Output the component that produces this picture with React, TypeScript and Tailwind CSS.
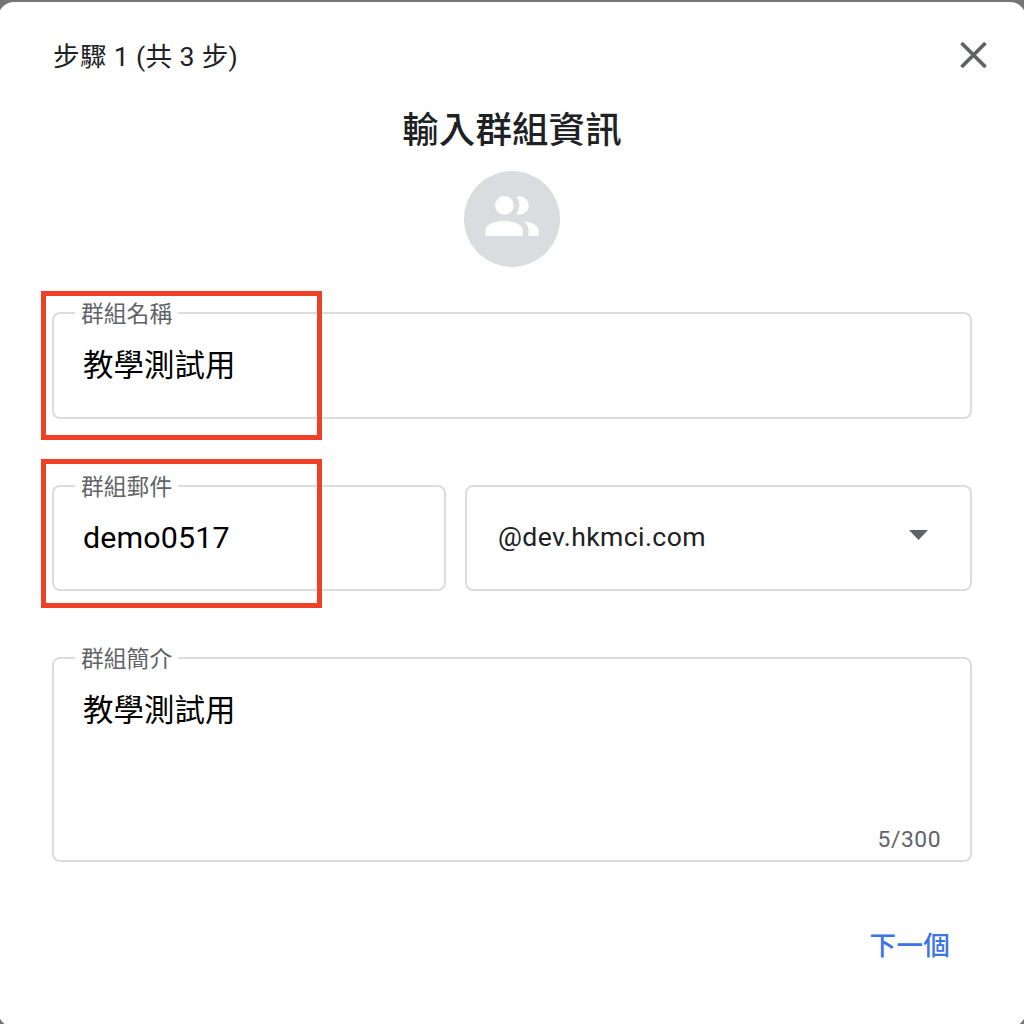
import React from 'react';

interface OutlinedFieldProps {
  label?: string;
  className?: string;
  children: React.ReactNode;
}

const OutlinedField: React.FC<OutlinedFieldProps> = ({ label, className = '', children }) => {
  return (
    <div className={`relative rounded-[8px] border-2 border-[#dadce0] ${className}`}>
      {label && (
        <span className="absolute -top-[13px] left-[21px] bg-white px-[6px] text-[22.8px] leading-[28px] whitespace-nowrap text-[#5f6368]">
          {label}
        </span>
      )}
      {children}
    </div>
  );
};

const CloseIcon: React.FC = () => (
  <svg width="28" height="28" viewBox="0 0 28 28" fill="none" stroke="#5f6368" strokeWidth="3.8">
    <path d="M2.5 2L26.5 26M26.5 2L2.5 26" />
  </svg>
);

const GroupIcon: React.FC = () => (
  <svg width="58" height="58" viewBox="0 0 58 58" fill="white">
    <circle cx="21.4" cy="18.4" r="9.3" />
    <path d="M2.5 49V43C2.5 36.5 15 33.7 21.4 33.7S39.9 36.5 39.9 43V49z" />
    <path d="M33.3 9.6C37.3 14.5 37.3 22.2 33.3 27.2c1 .3 2 .5 3.2.5a9.2 9.2 0 0 0 0-18.5c-1.2 0-2.2.1-3.2.4z" />
    <path d="M40.5 34.2C44 36.6 45.5 39.5 45.5 43V49h10V43C55.5 38 48 35 40.5 34.2z" />
  </svg>
);

const CreateGroupDialog: React.FC = () => {
  return (
    <div className="-mx-[2px] flex h-[1025px] shrink-0 flex-col rounded-[16px] bg-white px-[54px]">
      <header className="flex h-[100px] items-start justify-between">
        <span className="mt-[38px] ml-[1px] text-[26.6px] leading-[34px] tracking-[0.35px] whitespace-nowrap text-[#202124]">
          步驟 1 (共 3 步)
        </span>
        <button className="mt-[39px] -mr-[15px]" aria-label="關閉">
          <CloseIcon />
        </button>
      </header>

      <h1 className="mt-[1px] text-center text-[36.5px] leading-[56px] font-medium tracking-[0.1px] text-[#202124]">輸入群組資訊</h1>
      <div className="mx-auto mt-[12px] flex h-[96px] w-[96px] justify-center rounded-full bg-[#dadce0] pt-[16px]">
        <GroupIcon />
      </div>

      <form className="mt-[45px] flex flex-col text-black">
        <OutlinedField label="群組名稱" className="h-[107px]">
          <div className="pt-[32px] pl-[29px] text-[30.4px] leading-[40px] tracking-[0.1px]">教學測試用</div>
          <div className="absolute -top-[23px] -left-[13px] h-[149px] w-[281px] border-[5px] border-[#ee4026]" />
        </OutlinedField>

        <div className="mt-[66px] flex gap-[19px]">
          <OutlinedField label="群組郵件" className="h-[106px] w-[394px]">
            <div className="pt-[31px] pl-[29px] text-[30.4px] leading-[40px] tracking-[0.15px]">demo0517</div>
            <div className="absolute -top-[28px] -left-[13px] h-[149px] w-[281px] border-[5px] border-[#ee4026]" />
          </OutlinedField>
          <OutlinedField className="h-[106px] flex-1">
            <div className="flex items-center justify-between pt-[30px] pr-[42px] pl-[31px] text-[#202124]">
              <span className="text-[26.6px] leading-[40px] tracking-[0.38px]">@dev.hkmci.com</span>
              <svg width="19" height="10" viewBox="0 0 19 10" className="-mt-[4px]" fill="#5f6368">
                <path d="M0 0h19L9.5 10z" />
              </svg>
            </div>
          </OutlinedField>
        </div>

        <OutlinedField label="群組簡介" className="mt-[66px] flex h-[205px] flex-col justify-between">
          <div className="pt-[32px] pl-[29px] text-[30.4px] leading-[40px] tracking-[0.1px]">教學測試用</div>
          <span className="pr-[29px] pb-[6px] text-right text-[22.8px] leading-[28px] tracking-[0.55px] text-[#5f6368]">
            5/300
          </span>
        </OutlinedField>
      </form>

      <footer className="mt-[66px] flex justify-end pr-[22px]">
        <button className="text-[26.6px] leading-[36px] font-medium tracking-[0.2px] text-[#3b73e8]">下一個</button>
      </footer>
    </div>
  );
};

export default function App() {
  return (
    <div className="flex h-[1024px] w-full flex-col overflow-hidden bg-[#757575] pt-[2px] font-[Roboto,'Noto_Sans_CJK_TC',sans-serif]">
      <CreateGroupDialog />
    </div>
  );
}
